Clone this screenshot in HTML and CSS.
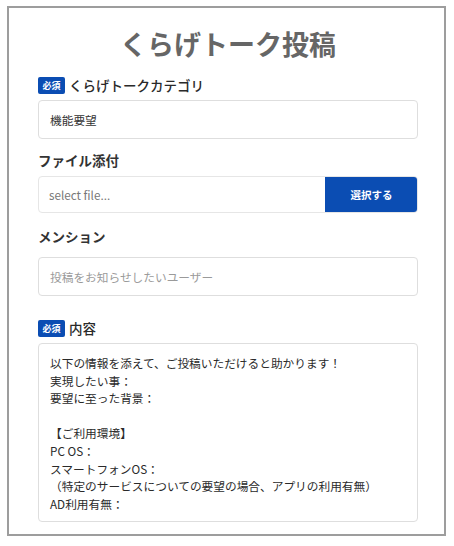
FILE: index.html
```html
<!DOCTYPE html>
<html lang="ja">
<head>
<meta charset="utf-8">
<title>くらげトーク投稿</title>
<link rel="stylesheet" href="styles.css">
</head>
<body>
<div class="frame">
  <h1 class="title">くらげトーク投稿</h1>

  <div class="label label-first"><span class="badge">必須</span><span class="label-text">くらげトークカテゴリ</span></div>
  <div class="input input-category">機能要望</div>

  <div class="label label-bold label-file">ファイル添付</div>
  <div class="file">
    <div class="file-name">select file...</div>
    <div class="file-button">選択する</div>
  </div>

  <div class="label label-bold label-mention">メンション</div>
  <div class="input input-mention placeholder">投稿をお知らせしたいユーザー</div>

  <div class="label label-content"><span class="badge">必須</span><span class="label-text">内容</span></div>
  <div class="textarea">以下の情報を添えて、ご投稿いただけると助かります！
実現したい事：
要望に至った背景：

【ご利用環境】
PC OS：
スマートフォンOS：
（特定のサービスについての要望の場合、アプリの利用有無）
AD利用有無：</div>
</div>
</body>
</html>
```

FILE: styles.css
```css
html, body {
  margin: 0;
  padding: 0;
  background: #ffffff;
}

body {
  padding: 6px 0 0 7px;
  font-family: "Noto Sans CJK JP", "Noto Sans", sans-serif;
  color: #333333;
}

.frame {
  box-sizing: border-box;
  width: 439px;
  height: 530px;
  border: 2px solid #9d9d9d;
  padding: 16px 0 0 29px;
}

.title {
  margin: 0;
  width: 380px;
  font-size: 27px;
  line-height: 40px;
  font-weight: 700;
  color: #666666;
  text-align: center;
}

.label {
  display: flex;
  align-items: center;
  height: 20px;
  font-size: 13.5px;
  line-height: 20px;
  color: #2a2a2a;
}

.label-text {
  font-weight: 500;
}

.label-bold {
  font-weight: 700;
  color: #333333;
}

.label-first { margin-top: 11px; }
.label-file { margin-top: 11px; }
.label-mention { margin-top: 13px; }
.label-content { margin-top: 22px; }

.badge {
  display: inline-flex;
  align-items: center;
  justify-content: center;
  width: 27px;
  height: 17px;
  margin-right: 4px;
  border-radius: 2px;
  background: #0b4db3;
  color: #ffffff;
  font-size: 9px;
  font-weight: 700;
  line-height: 1;
}

.input {
  box-sizing: border-box;
  width: 380px;
  height: 39px;
  margin-top: 5px;
  padding: 0 11px;
  border: 1px solid #dedede;
  border-radius: 4px;
  font-size: 11.7px;
  line-height: 37px;
  color: #333333;
}

.input-mention {
  margin-top: 11px;
}

.placeholder {
  color: #9a9a9a;
}

.file {
  display: flex;
  box-sizing: border-box;
  width: 380px;
  height: 37px;
  margin-top: 6px;
  border: 1px solid #e6e6e6;
  border-radius: 4px;
  overflow: hidden;
}

.file-name {
  flex: 1;
  padding: 0 10px;
  font-size: 11.7px;
  line-height: 35px;
  color: #777777;
}

.file-button {
  width: 93px;
  margin: -1px -1px -1px 0;
  background: #0b4db3;
  color: #ffffff;
  font-size: 10.5px;
  font-weight: 700;
  line-height: 37px;
  text-align: center;
}

.textarea {
  box-sizing: border-box;
  width: 380px;
  height: 179px;
  margin-top: 5px;
  padding: 10px 11px;
  border: 1px solid #dedede;
  border-radius: 4px;
  font-size: 11.7px;
  line-height: 17.6px;
  color: #2a2a2a;
  white-space: pre-line;
}
```
